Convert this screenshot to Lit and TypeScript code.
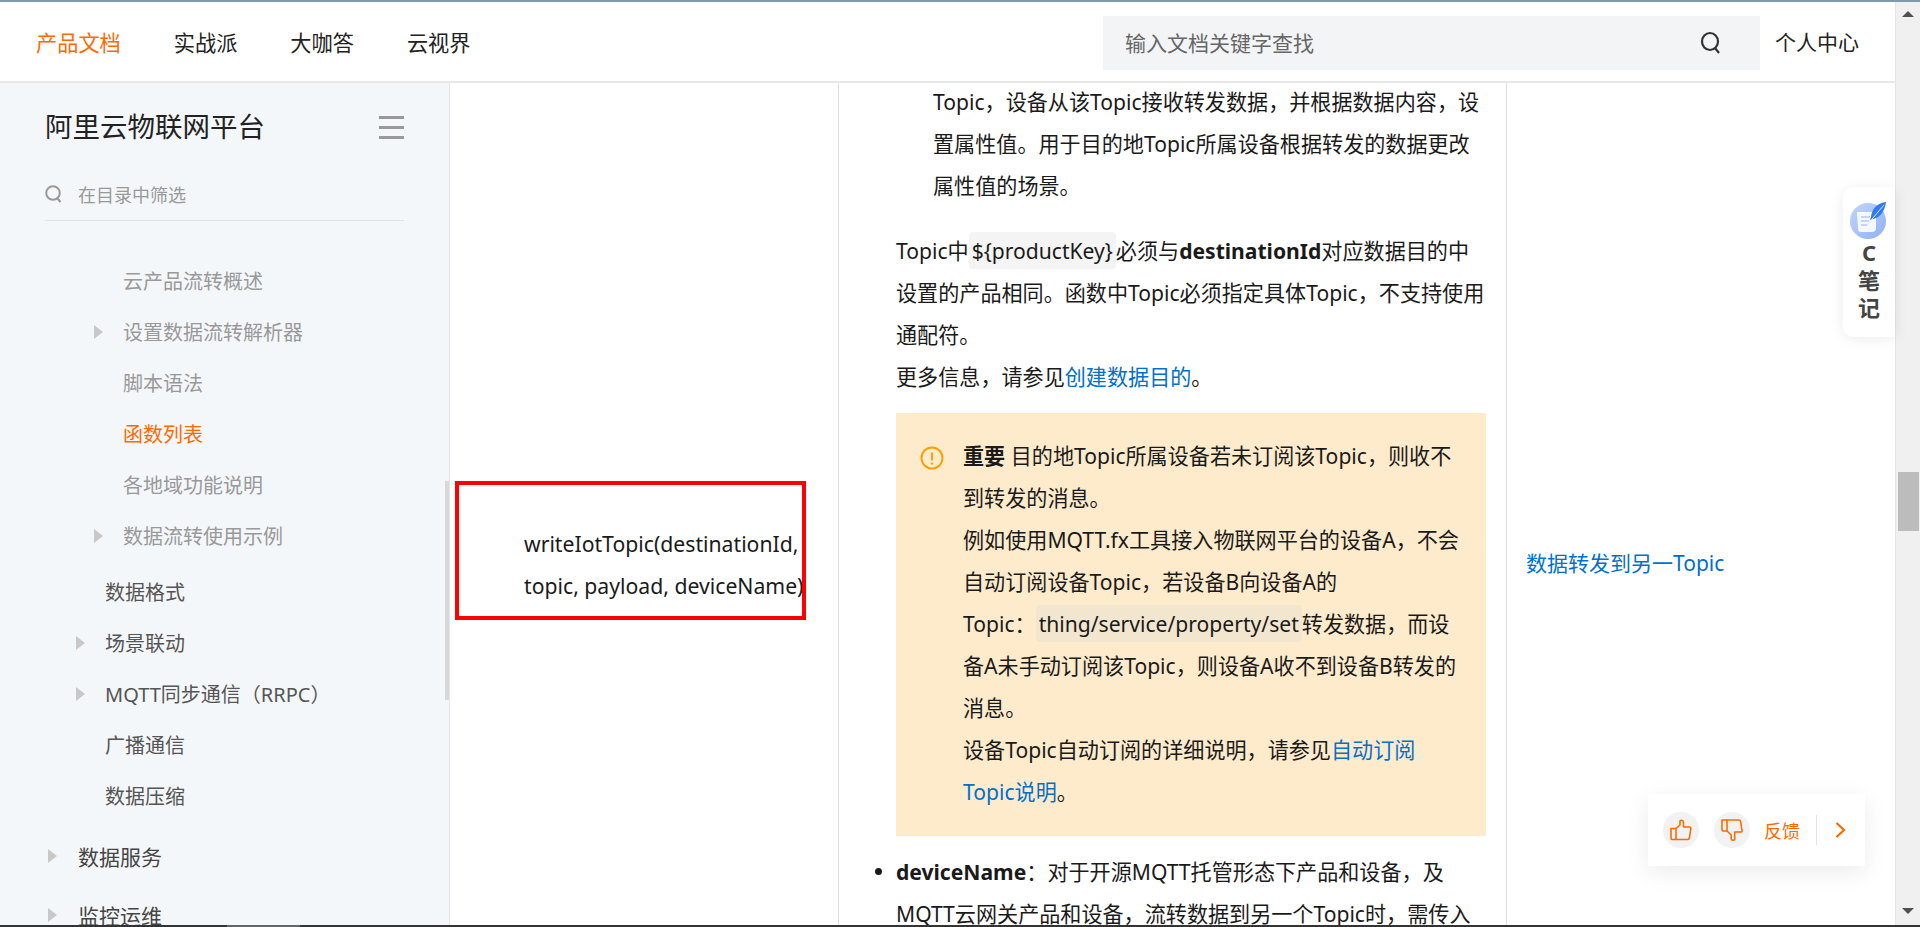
import { LitElement, html, css } from "lit";
import { customElement } from "lit/decorators.js";

const caret = (on: boolean) => html`<span class="caret ${on ? "" : "none"}"></span>`;

const l3 = [
  ["云产品流转概述", false, false],
  ["设置数据流转解析器", true, false],
  ["脚本语法", false, false],
  ["函数列表", false, true],
  ["各地域功能说明", false, false],
  ["数据流转使用示例", true, false],
] as const;
const l2 = [
  ["数据格式", false],
  ["场景联动", true],
  ["MQTT同步通信（RRPC）", true],
  ["广播通信", false],
  ["数据压缩", false],
] as const;

@customElement("app-root")
export class AppRoot extends LitElement {
  static styles = css`
    :host {
      display: flex;
      flex-direction: column;
      height: 927px;
      overflow: hidden;
      position: relative;
      background: #fff;
      color: #1a1a1a;
      font-family: "Noto Sans", "Noto Sans CJK SC", sans-serif;
    }
    .stripe { height: 2px; background: #7d9aaa; flex: none; }
    .main { flex: 1; display: flex; min-height: 0; }
    .page { flex: 1; min-width: 0; display: flex; flex-direction: column; }
    header {
      height: 76px;
      flex: none;
      border-bottom: 2px solid #e8e8e8;
      display: flex;
      align-items: center;
      padding: 3px 0 0 36px;
      font-size: 21.2px;
      color: #222;
    }
    .nav { display: flex; gap: 53px; flex: 1; padding-bottom: 4px; }
    .nav .on { color: #ff6a00; }
    .search {
      width: 657px;
      height: 54px;
      background: #f3f4f6;
      display: flex;
      align-items: center;
      justify-content: space-between;
      padding: 0 38px 0 22px;
      box-sizing: border-box;
      color: #666;
      font-size: 21px;
    }
    .search span { padding-bottom: 3px; }
    .me { margin: 0 36px 0 15px; font-size: 21px; padding-bottom: 4px; }
    .cols { flex: 1; min-height: 0; display: flex; }
    aside {
      width: 450px;
      flex: none;
      box-sizing: border-box;
      background: #f4f7fa;
      border-right: 1px solid #e4e6e9;
      overflow: hidden;
      position: relative;
    }
    .side-scroll {
      position: absolute;
      left: 445px;
      top: 398px;
      width: 4px;
      height: 219px;
      background: #d8d8d8;
    }
    .title {
      display: flex;
      justify-content: space-between;
      align-items: center;
      margin: 22px 45px 0;
      height: 40px;
      font-size: 27.5px;
      color: #222;
    }
    .burger { width: 25px; display: flex; flex-direction: column; gap: 7px; margin-top: 4px; }
    .burger i { display: block; height: 3px; background: #999; }
    .filter {
      margin: 31px 45px 0;
      height: 36px;
      padding-bottom: 8px;
      display: flex;
      align-items: center;
      gap: 16px;
      border-bottom: 1px solid #dfe3e8;
      color: #999;
      font-size: 18px;
    }
    .tree { margin-top: 34px; }
    .row { height: 51px; display: flex; align-items: center; font-size: 20px; }
    .caret {
      width: 0;
      height: 0;
      border-left: 9px solid #c8c8c8;
      border-top: 7px solid transparent;
      border-bottom: 7px solid transparent;
      flex: none;
    }
    .caret.none { visibility: hidden; }
    .l3 { padding-left: 94px; color: #999; }
    .l3 .caret { margin-right: 20px; }
    .l3.on { color: #ff6a00; }
    .l2 { padding-left: 76px; color: #555; }
    .l2 .caret { margin-right: 20px; }
    .gap2 { margin-top: 5px; }
    .l1 { padding-left: 48px; color: #444; font-size: 21px; }
    .l1 .caret { margin-right: 21px; }
    .gap1 { margin-top: 9px; }
    .gap0 { margin-top: 8px; }
    .mid {
      width: 389px;
      flex: none;
      box-sizing: border-box;
      border-right: 1px solid #e2e2e2;
      padding: 398px 0 0 5px;
    }
    .red {
      width: 351px;
      height: 139px;
      box-sizing: border-box;
      border: 4px solid #f00;
      padding: 38px 0 0 65px;
      overflow: hidden;
      white-space: nowrap;
      font-size: 21.2px;
      line-height: 42px;
    }
    .doc {
      width: 668px;
      flex: none;
      box-sizing: border-box;
      border-right: 1px solid #e2e2e2;
      padding: 0 20px 0 57px;
      font-size: 21.1px;
      line-height: 42px;
      white-space: nowrap;
      overflow: hidden;
    }
    .doc p { margin: 0; }
    .indent { padding-left: 37px; margin-top: -2px !important; }
    .gap { margin-top: 23px !important; }
    code {
      font: inherit;
      background: #f4f4f4;
      border-radius: 4px;
      padding: 4px 3px;
    }
    a { color: #0070cc; text-decoration: none; }
    .note {
      margin-top: 15px;
      background: #feebcc;
      padding: 22px 0 23px 24px;
      display: flex;
      gap: 19px;
    }
    .note svg { flex: none; margin-top: 11px; }
    .note code { background: #f3e6cf; }
    ul { margin: 15px 0 0; padding: 0; list-style: none; }
    li { position: relative; }
    li::before {
      content: "";
      position: absolute;
      left: -21px;
      top: 17px;
      width: 7px;
      height: 7px;
      border-radius: 50%;
      background: #1a1a1a;
    }
    .right { flex: 1; padding: 459px 0 0 19px; font-size: 21px; line-height: 42px; }
    .bar {
      width: 25px;
      flex: none;
      box-sizing: border-box;
      background: #f0f0f0;
      border-left: 1px solid #e6e6e6;
      display: flex;
      flex-direction: column;
      align-items: center;
      padding: 9px 0 11px;
    }
    .up, .down { width: 0; height: 0; border-left: 6px solid transparent; border-right: 6px solid transparent; }
    .up { border-bottom: 6px solid #505050; }
    .down { border-top: 6px solid #505050; margin-top: auto; }
    .thumb { width: 21px; height: 59px; background: #bcbcbc; margin-top: 455px; }
    .bottom { height: 2px; flex: none; background: #333; position: relative; }
    .bottom i { position: absolute; left: 227px; width: 73px; top: 0; bottom: 0; background: #666; }
    .notes {
      position: absolute;
      left: 1843px;
      top: 187px;
      width: 52px;
      height: 150px;
      background: #fff;
      border-radius: 10px 0 0 10px;
      box-shadow: 0 2px 14px rgba(0, 0, 0, 0.08);
      display: flex;
      flex-direction: column;
      align-items: center;
      padding-top: 14px;
      box-sizing: border-box;
      font-size: 22px;
      font-weight: 700;
      color: #444;
      line-height: 27.5px;
      text-align: center;
    }
    .fb {
      position: absolute;
      left: 1648px;
      top: 794px;
      width: 217px;
      height: 72px;
      background: #fff;
      box-shadow: 0 6px 24px rgba(0, 0, 0, 0.08);
      display: flex;
      align-items: center;
      padding-left: 15px;
      box-sizing: border-box;
      color: #ff6a00;
      font-size: 18px;
    }
    .circle {
      width: 36px;
      height: 36px;
      border-radius: 50%;
      background: #f2f2f2;
      display: flex;
      align-items: center;
      justify-content: center;
      margin-right: 15px;
    }
    .circle.last { margin-right: 14px; }
    .sep { width: 1px; height: 30px; background: #e4e4e4; margin: 0 18px 0 16px; }
  `;

  render() {
    return html`
      <div class="stripe"></div>
      <div class="main">
        <div class="page">
          <header>
            <div class="nav">
              <span class="on">产品文档</span><span>实战派</span><span>大咖答</span><span>云视界</span>
            </div>
            <div class="search">
              <span>输入文档关键字查找</span>
              <svg width="22" height="24" viewBox="0 0 22 24" fill="none" stroke="#333" stroke-width="2.2">
                <ellipse cx="10" cy="10.5" rx="8" ry="8.5" />
                <path d="M15 17l4 5" />
              </svg>
            </div>
            <span class="me">个人中心</span>
          </header>
          <div class="cols">
            <aside>
              <div class="side-scroll"></div>
              <div class="title">
                <span>阿里云物联网平台</span>
                <span class="burger"><i></i><i></i><i></i></span>
              </div>
              <div class="filter">
                <svg width="17" height="18" viewBox="0 0 17 18" fill="none" stroke="#999" stroke-width="2">
                  <circle cx="8" cy="8" r="6.8" />
                  <path d="M12 13l3.5 4" />
                </svg>
                <span>在目录中筛选</span>
              </div>
              <div class="tree">
                ${l3.map(([t, c, on]) => html`<div class="row l3 ${on ? "on" : ""}">${caret(c)}<span>${t}</span></div>`)}
                ${l2.map(([t, c], i) => html`<div class="row l2 ${i === 0 ? "gap2" : ""}">${caret(c)}<span>${t}</span></div>`)}
                <div class="row l1 gap1">${caret(true)}<span>数据服务</span></div>
                <div class="row l1 gap0">${caret(true)}<span>监控运维</span></div>
              </div>
            </aside>
            <div class="mid">
              <div class="red">writeIotTopic(destinationId,<br />topic, payload, deviceName)</div>
            </div>
            <div class="doc">
              <p class="indent">
                Topic，设备从该Topic接收转发数据，并根据数据内容，设<br />
                置属性值。用于目的地Topic所属设备根据转发的数据更改<br />
                属性值的场景。
              </p>
              <p class="gap">
                Topic中<code>\${productKey}</code>必须与<b>destinationId</b>对应数据目的中<br />
                设置的产品相同。函数中Topic必须指定具体Topic，不支持使用<br />
                通配符。<br />
                更多信息，请参见<a>创建数据目的</a>。
              </p>
              <div class="note">
                <svg width="24" height="24" viewBox="0 0 24 24" fill="none" stroke="#ffa003" stroke-width="2">
                  <circle cx="12" cy="12" r="10.5" />
                  <path d="M12 6.5v8M12 16.5v2" />
                </svg>
                <div>
                  <b>重要</b> 目的地Topic所属设备若未订阅该Topic，则收不<br />
                  到转发的消息。<br />
                  例如使用MQTT.fx工具接入物联网平台的设备A，不会<br />
                  自动订阅设备Topic，若设备B向设备A的<br />
                  Topic：<code>thing/service/property/set</code>转发数据，而设<br />
                  备A未手动订阅该Topic，则设备A收不到设备B转发的<br />
                  消息。<br />
                  设备Topic自动订阅的详细说明，请参见<a>自动订阅<br />Topic说明</a>。
                </div>
              </div>
              <ul>
                <li><b>deviceName</b>：对于开源MQTT托管形态下产品和设备，及<br />MQTT云网关产品和设备，流转数据到另一个Topic时，需传入</li>
              </ul>
            </div>
            <div class="right"><a>数据转发到另一Topic</a></div>
          </div>
        </div>
        <div class="bar">
          <span class="up"></span>
          <span class="thumb"></span>
          <span class="down"></span>
        </div>
      </div>
      <div class="bottom"><i></i></div>

      <div class="notes">
        <svg width="38" height="38" viewBox="0 0 38 38">
          <defs>
            <linearGradient id="g" x1="0" y1="0" x2="1" y2="1">
              <stop offset="0" stop-color="#c3d6fb" />
              <stop offset="1" stop-color="#8fb0f2" />
            </linearGradient>
          </defs>
          <circle cx="18" cy="20" r="18" fill="url(#g)" />
          <path d="M7 11h19v16a4 4 0 0 1-4 4H11a3 3 0 0 1-3-3z" fill="#f4f7ff" />
          <path d="M11 16h9M11 20h8M11 24h6" stroke="#b6c9f3" stroke-width="1.5" fill="none" />
          <path d="M36 1c-8 1-14 6-15 15l-1 3 3-1c7-1 12-8 13-17z" fill="#2f7bf5" />
          <path d="M34 4L17 24" stroke="#dbe7ff" stroke-width="1" fill="none" />
        </svg>
        <span>C</span><span>笔</span><span>记</span>
      </div>

      <div class="fb">
        <span class="circle">
          <svg width="22" height="22" viewBox="0 0 22 22" fill="none" stroke="#ff6a00" stroke-width="1.6" stroke-linejoin="round">
            <path d="M1 9.5h5v11H2a1 1 0 0 1-1-1z" />
            <path d="M6 9.5l4-3.5V2c0-1 3.5-1.5 3.5 1.5V8h6c1 0 1.5 1 1.3 2l-1.4 9c-.2 1-.8 1.5-1.6 1.5H6" />
          </svg>
        </span>
        <span class="circle last">
          <svg width="22" height="24" viewBox="0 0 22 24" fill="none" stroke="#ff6a00" stroke-width="1.6" stroke-linejoin="round">
            <path d="M1 2h5v11H2a1 1 0 0 1-1-1z" />
            <path d="M6 2h12c.8 0 1.4.5 1.6 1.5l1.4 9c.2 1-.3 1.5-1.3 1.5h-6v7c0 2-3.5 1.5-3.5 0v-4L6 13" />
          </svg>
        </span>
        <span>反馈</span>
        <span class="sep"></span>
        <svg width="11" height="16" viewBox="0 0 11 16" fill="none" stroke="#ff6a00" stroke-width="2.2">
          <path d="M1.5 1l7.5 7-7.5 7" />
        </svg>
      </div>
    `;
  }
}
